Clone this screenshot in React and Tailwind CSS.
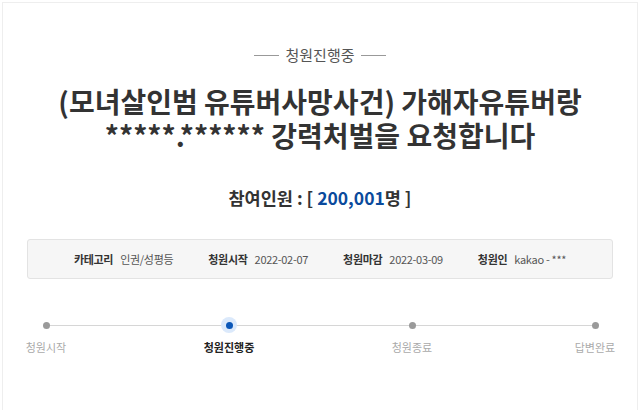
import React from 'react'

const INFO = [
  { label: '카테고리', value: '인권/성평등' },
  { label: '청원시작', value: '2022-02-07' },
  { label: '청원마감', value: '2022-03-09' },
  { label: '청원인', value: 'kakao - ***' },
]

const STEPS = [
  { label: '청원시작', active: false },
  { label: '청원진행중', active: true },
  { label: '청원종료', active: false },
  { label: '답변완료', active: false },
]

export default function App() {
  return (
    <div className="w-[640px] h-[410px] overflow-hidden bg-white p-[2px]" style={{ fontFamily: '"Noto Sans CJK KR", "Noto Sans", sans-serif' }}>
      <div className="h-[440px] border border-[#eeeeee] border-b-0">
        {/* status */}
        <div className="mt-[40px] flex items-center justify-center gap-[6px] text-[15px] leading-[24px] text-[#555]">
          <span className="w-[25px] h-px bg-[#999]" />
          <span>청원진행중</span>
          <span className="w-[25px] h-px bg-[#999]" />
        </div>

        {/* title */}
        <h1 className="mt-[17px] text-center text-[28px] leading-[34px] font-bold text-[#333]">
          (모녀살인범 유튜버사망사건) 가해자유튜버랑
          <br />
          *****.****** 강력처벌을 요청합니다
        </h1>

        {/* count */}
        <p className="mt-[34px] text-center text-[17.5px] leading-[24px] font-bold text-[#333]">
          참여인원 : [ <span className="text-[#0a4a9c]">200,001</span>명 ]
        </p>

        {/* info box */}
        <div className="mt-[29px] mx-[24px] h-[40px] rounded-[3px] border border-[#e3e3e3] bg-[#f6f6f6] flex items-center justify-center gap-[35px] text-[11px] tracking-[-0.3px]">
          {INFO.map(it => (
            <div key={it.label} className="flex items-center gap-[7px]">
              <span className="font-bold text-[#333]">{it.label}</span>
              <span className="text-[#555]">{it.value}</span>
            </div>
          ))}
        </div>

        {/* progress */}
        <div className="relative mt-[33px] ml-[3px] mr-[2px]">
          <div className="absolute left-[40px] right-[40px] top-[13px] h-px bg-[#d6d6d6]" />
          <div className="relative flex justify-between">
            {STEPS.map(s => (
              <div key={s.label} className="w-[80px] flex flex-col items-center">
                <div className="h-[26px] flex items-center justify-center">
                  {s.active ? (
                    <span className="w-[16px] h-[16px] rounded-full bg-[#dbe9fb] flex items-center justify-center">
                      <span className="w-[7px] h-[7px] rounded-full bg-[#0b57b8]" />
                    </span>
                  ) : (
                    <span className="w-[7px] h-[7px] rounded-full bg-[#9a9a9a]" />
                  )}
                </div>
                <span className={s.active ? 'text-[11px] leading-[18px] font-bold text-[#222]' : 'text-[11px] leading-[18px] text-[#aaa]'}>
                  {s.label}
                </span>
              </div>
            ))}
          </div>
        </div>
      </div>
    </div>
  )
}
